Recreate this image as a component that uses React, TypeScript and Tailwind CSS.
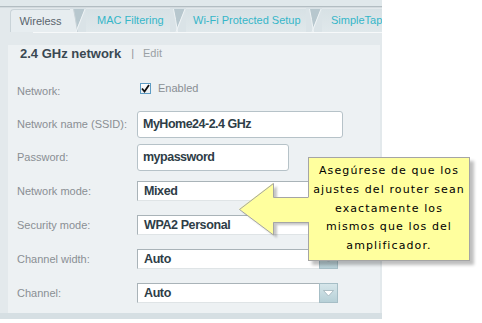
import React from "react";

function Sep({ activeLeft = false }: { activeLeft?: boolean }) {
  return (
    <svg width="16" height="24" viewBox="0 0 16 24" className="block shrink-0">
      <rect x="0" y="0" width="16" height="24" fill="#dae3e7" />
      <polygon points="0,1 4,1 7.5,24 0,24" fill={activeLeft ? "#e7edf0" : "#dae3e7"} />
      <polygon points="3.5,1 15,1 7,20" fill="#b7c7ce" />
      <path d="M3.5 1 Q5.5 10 7.5 24" stroke={activeLeft ? "#c9d3d8" : "#eef3f5"} strokeWidth="1" fill="none" />
      <path d="M15 1 L6 24" stroke="#eef3f5" strokeWidth="1" fill="none" />
    </svg>
  );
}

function Tab({ children, w, active = false }: { children: React.ReactNode; w: string; active?: boolean }) {
  return (
    <div
      className={
        active
          ? `${w} h-[23px] mt-[1px] shrink-0 flex items-center justify-center text-[11px] text-[#59646d] bg-[#e7edf0] border-l border-t border-[#c9d3d8] rounded-tl-[4px]`
          : `${w} h-[23px] mt-[1px] shrink-0 flex items-center text-[11px] text-[#35b6c8] bg-gradient-to-b from-[#d7e1e5] to-[#e0e8eb]`
      }
    >
      {children}
    </div>
  );
}

function Label({ children }: { children: React.ReactNode }) {
  return <div className="w-[129px] shrink-0 pl-[9px] text-[11px] text-[#8a8f93] whitespace-nowrap">{children}</div>;
}

function Select({ value }: { value: string }) {
  return (
    <div className="flex w-[201px] h-[20px]">
      <div className="flex-1 bg-white border-t border-l border-b border-t-[#a9b3b8] border-l-[#a9b3b8] border-b-[#dfe4e6] flex items-center pl-[6px] text-[12.5px] font-bold tracking-[-0.4px] text-[#2e3d47]">
        {value}
      </div>
      <div className="w-[19px] h-[20px] bg-gradient-to-b from-[#d6e6ea] to-[#b7d0d7] border border-[#a6bec6] flex items-center justify-center">
        <svg width="11" height="7" viewBox="0 0 11 7">
          <polygon points="0.5,0.5 10.5,0.5 5.5,6" fill="#ffffff" stroke="#9fb3ba" strokeWidth="0.8" />
        </svg>
      </div>
    </div>
  );
}

export default function App() {
  return (
    <div className="relative w-[482px] h-[323px] bg-white overflow-hidden" style={{ fontFamily: '"Liberation Sans", Arial, sans-serif' }}>
      <div className="w-[382px] h-[319px] flex flex-col bg-[#e3e9ec] overflow-hidden">
        <div className="h-[6px] bg-[#e0e8eb] shrink-0" />
        <div className="h-px bg-[#b3bdc2] shrink-0" />
        <div className="h-px bg-[#d3dbdf] shrink-0" />
        <div className="flex h-[24px] shrink-0 bg-[#e3e9ec]">
          <div className="w-[10px] shrink-0" />
          <Tab w="w-[60px]" active>
            Wireless
          </Tab>
          <Sep activeLeft />
          <Tab w="w-[84px]">
            <span className="pl-[11px]">MAC Filtering</span>
          </Tab>
          <Sep />
          <Tab w="w-[120px]">
            <span className="pl-[7px] whitespace-nowrap">Wi-Fi Protected Setup</span>
          </Tab>
          <Sep />
          <Tab w="w-[60px]">
            <span className="pl-[9px] whitespace-nowrap">SimpleTap</span>
          </Tab>
        </div>
        <div className="h-px bg-[#f7f9fa] shrink-0 ml-[33px]" />
        <div className="flex-1 flex flex-col pt-[12px] pl-[8px] pr-[2px]">
          <div className="flex-1 bg-[#edf1f3] flex flex-col">
            <div className="h-[17px] flex items-center pl-[12px]">
              <span className="text-[13px] font-bold text-[#3a4852]">2.4 GHz network</span>
              <span className="ml-[10px] text-[11px] text-[#8f959a]">|</span>
              <span className="ml-[9px] text-[11px] text-[#9aa0a4]">Edit</span>
            </div>
            <div className="h-[10px]" />
            <div className="flex items-center h-[35px]">
              <div className="mt-[3px]">
                <Label>Network:</Label>
              </div>
              <div className="flex items-center -mt-[3px] ml-[3px]">
                <div className="w-[11px] h-[11px] bg-gradient-to-b from-[#ffffff] to-[#e8eef2] border border-[#5e9cc4] flex items-center justify-center">
                  <svg width="9" height="9" viewBox="0 0 9 9">
                    <path d="M1 4.5 L3.5 7.5 L8 1" stroke="#111" strokeWidth="1.8" fill="none" />
                  </svg>
                </div>
                <span className="ml-[7px] text-[11px] text-[#8a8f93]">Enabled</span>
              </div>
            </div>
            <div className="flex items-center h-[34px]">
              <Label>Network name (SSID):</Label>
              <div className="w-[206px] h-[27px] bg-white border border-[#b6c2c8] rounded-[3px] flex items-center pl-[5px] text-[12.5px] font-bold tracking-[-0.5px] text-[#2e3d47]">
                MyHome24-2.4 GHz
              </div>
            </div>
            <div className="flex items-center h-[33px]">
              <Label>Password:</Label>
              <div className="w-[152px] h-[27px] bg-white border border-[#b6c2c8] rounded-[3px] flex items-center pl-[5px] text-[12.5px] font-bold tracking-[-0.5px] text-[#2e3d47]">
                mypassword
              </div>
            </div>
            <div className="flex items-center h-[34px]">
              <Label>Network mode:</Label>
              <Select value="Mixed" />
            </div>
            <div className="flex items-center h-[34px]">
              <Label>Security mode:</Label>
              <Select value="WPA2 Personal" />
            </div>
            <div className="flex items-center h-[34px]">
              <Label>Channel width:</Label>
              <Select value="Auto" />
            </div>
            <div className="flex items-center h-[34px]">
              <Label>Channel:</Label>
              <Select value="Auto" />
            </div>
          </div>
        </div>
        <div className="h-[6px] bg-[#d6dfe3] shrink-0" />
      </div>

      <svg className="absolute left-[232px] top-[178px]" width="90" height="70" viewBox="0 0 90 70">
        <defs>
          <filter id="blur1" x="-20%" y="-20%" width="140%" height="140%">
            <feGaussianBlur stdDeviation="1.2" />
          </filter>
        </defs>
        <polygon points="11,34 45,8 45,22 82,22 82,47 45,47 45,60" fill="#000" opacity="0.22" filter="url(#blur1)" />
      </svg>
      <div
        className="absolute left-[308px] top-[157px] w-[162px] h-[104px] bg-[#ffff9e] border border-[#a5a5a5] shadow-[4px_4px_3px_rgba(0,0,0,0.25)] text-center text-black text-[11px] leading-[18.75px] tracking-[1.1px] pt-[4px]"
        style={{ fontFamily: '"DejaVu Sans", Verdana, sans-serif' }}
      >
        Asegúrese de que los
        <br />
        ajustes del router sean
        <br />
        exactamente los
        <br />
        mismos que los del
        <br />
        amplificador.
      </div>
      <svg className="absolute left-[232px] top-[178px]" width="80" height="64" viewBox="0 0 80 64">
        <polygon points="7,31 41,5 41,19 78,19 78,44 41,44 41,57" fill="#ffff9e" />
        <polyline
          points="76.5,19.5 41.5,19.5 41.5,5.5 7.5,31.5 41.5,57 41.5,44.5 76.5,44.5"
          fill="none"
          stroke="#a5a5a5"
          strokeWidth="1"
        />
      </svg>
    </div>
  );
}
